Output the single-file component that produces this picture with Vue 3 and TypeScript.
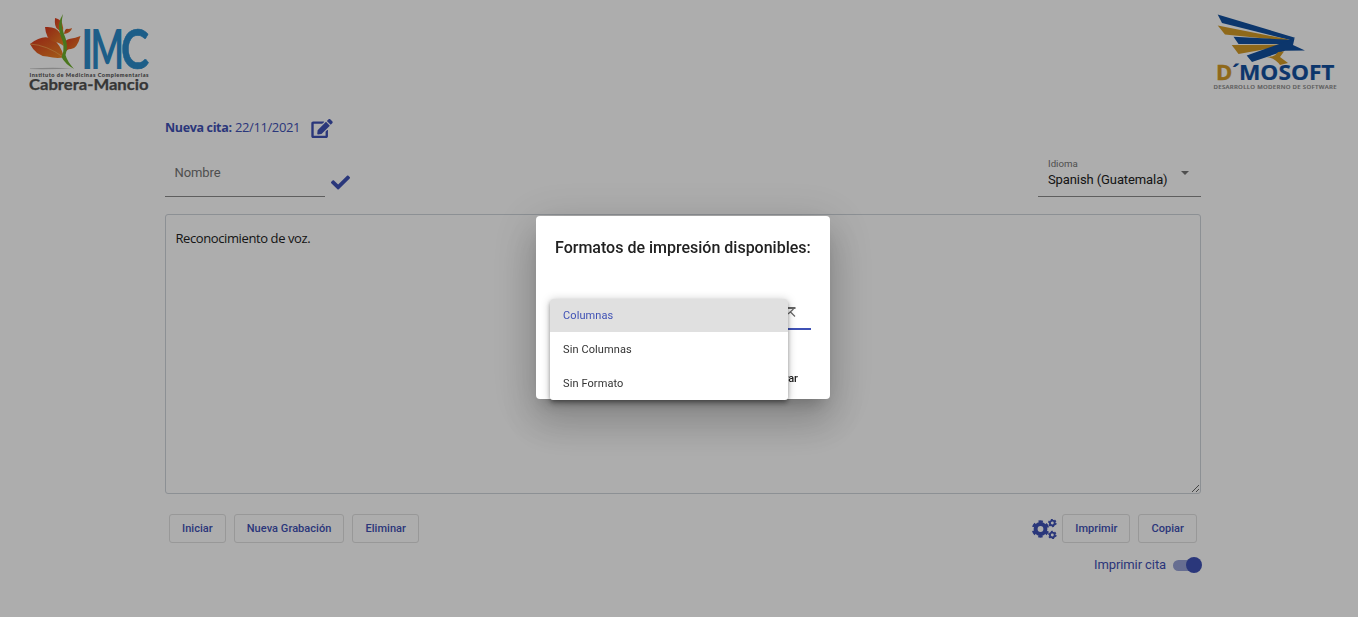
<script setup lang="ts">
import { ref } from 'vue'

const options = ['Columnas', 'Sin Columnas', 'Sin Formato']
const selected = ref('Columnas')
const name = ref('')
const transcript = ref('Reconocimiento de voz.')
const date = '22/11/2021'
</script>

<template>
  <div class="page">
    <header class="header">
      <svg class="logo-imc" width="124" height="84" viewBox="0 0 124 84">
        <defs>
          <linearGradient id="leaf" x1="0" y1="0" x2="1" y2="1">
            <stop offset="0" stop-color="#d8371f" />
            <stop offset="1" stop-color="#f08a25" />
          </linearGradient>
        </defs>
        <path d="M3 54.500Q24 53 46 54.300Q24 55.500 3 55Z" fill="#c4c4c4" />
        <path d="M3 30Q16 20 25 25Q33 29 37 43Q31 45 20 42.500Q9 42 3 30Z" fill="url(#leaf)" />
        <path d="M3 30Q20 31 36 43" fill="none" stroke="#f7b05a" stroke-width=".7" />
        <path d="M18 13Q29 12 33 19Q37 25 36.500 32Q32 28 26 27.500Q19 25 18 13Z" fill="url(#leaf)" />
        <path d="M28 4Q33 5 35 9Q37 14 36 20Q34 17 31 15.500Q27 13 28 4Z" fill="url(#leaf)" />
        <path d="M37 20Q38 14 41 15Q43 15 45 14Q44 19 37 20Z" fill="url(#leaf)" />
        <path d="M38 40Q34 27 42 25Q49 24 53.500 22Q50 35 44 35Q39 35 38 40Z" fill="url(#leaf)" />
        <path d="M36 0Q29 10 34 23Q39 33 34.500 43Q38 50 47 55Q40 47 38.500 41Q42 31 37 20Q33 11 36 0Z" fill="#6eaf2c" />
        <g font-family="Lato, sans-serif" font-weight="700" font-size="54.500" fill="#2b8bc9">
          <text x="54.300" y="55" textLength="12" lengthAdjust="spacingAndGlyphs">I</text>
          <text x="63.500" y="55" textLength="33.500" lengthAdjust="spacingAndGlyphs">M</text>
          <text x="94" y="55" textLength="28" lengthAdjust="spacingAndGlyphs" stroke="#2b8bc9" stroke-width=".6">C</text>
        </g>
        <text x="2.500" y="62.500" textLength="119" font-family="Lato, sans-serif" font-weight="900" font-size="5.600" fill="#555">Instituto de Medicinas Complementarias</text>
        <text x="2" y="76" textLength="119.500" lengthAdjust="spacingAndGlyphs" font-family="Lato, sans-serif" font-weight="700" font-size="15" stroke="#505050" stroke-width=".25" fill="#505050">Cabrera-Mancio</text>
      </svg>
      <svg class="logo-dmosoft" width="130" height="84" viewBox="0 0 130 84">
        <path d="M7.700 .5L85 23.700L82 26.500L12 9Z" fill="#12509f" />
        <path d="M7.700 11.500L79 25.500L74 26.500L15 20.500Z" fill="#d39b27" />
        <path d="M23.500 22.700L83 26L78 30L28.500 30Z" fill="#12509f" />
        <path d="M21.700 31L77 30.500L67 33L28.500 40Z" fill="#d39b27" />
        <path d="M36.700 41.500L84.500 24.500L83 31L95 36.500L75 36.700L42 48Z" fill="#12509f" />
        <path d="M56.700 43Q65 43 68 38L74 37.500L70 43L78 49L70 51Q65 44 56.700 43Z" fill="#d39b27" />
        <g font-family="Open Sans, sans-serif" font-weight="700" font-size="22">
          <text x="6" y="66" stroke="#d39b27" stroke-width=".4" fill="#d39b27">D</text>
          <text x="22" y="66" fill="#12509f">´</text>
          <text x="29" y="66" textLength="95.500" lengthAdjust="spacingAndGlyphs" stroke="#12509f" stroke-width=".2" fill="#12509f">MOSOFT</text>
        </g>
        <text x="3.500" y="75" textLength="123" font-family="Open Sans, sans-serif" font-weight="600" font-size="6" stroke="#888" stroke-width=".15" fill="#888">DESARROLLO MODERNO DE SOFTWARE</text>
      </svg>
    </header>

    <main class="content">
      <div class="appointment">
        <span><b>Nueva cita:</b> <span class="date">{{ date }}</span></span>
        <svg class="edit" width="22" height="19" viewBox="0 0 576 512" fill="currentColor"><path d="M402.600 83.200l90.200 90.200c3.800 3.800 3.800 10 0 13.800L274.400 405.600l-92.800 10.300c-12.400 1.400-22.900-9.100-21.500-21.500l10.300-92.800L388.800 83.200c3.800-3.800 10-3.800 13.800 0zm162-22.900l-48.800-48.800c-15.200-15.200-39.900-15.200-55.200 0l-35.400 35.400c-3.800 3.800-3.800 10 0 13.800l90.200 90.200c3.800 3.800 10 3.800 13.800 0l35.400-35.400c15.200-15.300 15.200-40 0-55.200zM384 346.200V448H64V128h229.800c3.200 0 6.200-1.300 8.500-3.500l40-40c7.600-7.600 2.200-20.500-8.500-20.500H48C21.500 64 0 85.500 0 112v352c0 26.500 21.500 48 48 48h352c26.500 0 48-21.500 48-48V306.200c0-10.700-12.900-16-20.500-8.500l-40 40c-2.200 2.300-3.500 5.300-3.500 8.500z" /></svg>
      </div>

      <div class="fields">
        <input v-model="name" class="name" placeholder="Nombre" />
        <svg class="check" width="19" height="19" viewBox="0 0 512 512" fill="currentColor"><path d="M173.900 439.400l-166.400-166.400c-10-10-10-26.200 0-36.200l36.200-36.200c10-10 26.200-10 36.200 0L192 312.700 432.100 72.600c10-10 26.200-10 36.200 0l36.200 36.200c10 10 10 26.200 0 36.200l-294.400 294.400c-10 10-26.200 10-36.200 0z" /></svg>
        <div class="language">
          <div>
            <div class="language-label">Idioma</div>
            <div class="language-value">Spanish (Guatemala)</div>
          </div>
          <i class="caret"></i>
        </div>
      </div>

      <textarea v-model="transcript" class="transcript" spellcheck="false"></textarea>

      <div class="actions">
        <button>Iniciar</button>
        <button>Nueva Grabación</button>
        <button>Eliminar</button>
        <svg class="cogs" width="25" height="20" viewBox="0 0 25 20" fill="none" stroke="currentColor">
          <circle cx="8.500" cy="10" r="4.900" stroke-width="4" />
          <circle cx="8.500" cy="10" r="7.500" stroke-width="2.400" stroke-dasharray="4.200 3.654" stroke-dashoffset="2.100" transform="rotate(30 8.500 10)" />
          <circle cx="20.300" cy="4" r="2.400" stroke-width="1.900" />
          <circle cx="20.300" cy="4" r="3.600" stroke-width="1.400" stroke-dasharray="2 1.770" />
          <circle cx="20.300" cy="16" r="2.400" stroke-width="1.900" />
          <circle cx="20.300" cy="16" r="3.600" stroke-width="1.400" stroke-dasharray="2 1.770" />
        </svg>
        <button>Imprimir</button>
        <button>Copiar</button>
      </div>
      <div class="print-toggle">
        <span class="toggle-label">Imprimir cita</span>
        <span class="track"><i class="thumb"></i></span>
      </div>
    </main>

    <div class="backdrop">
      <section class="dialog">
        <h2>Formatos de impresión disponibles:</h2>
        <div class="select-line">
          <svg width="10" height="12" viewBox="0 0 10 12" fill="none" stroke="#666"><path d="M0 1H9.500" stroke-width="2" /><path d="M7.500 2L2 7M4 4.500L9 9.500" stroke-width="1.200" /></svg>
        </div>
        <div class="close">Cerrar</div>
        <ul class="menu">
          <li v-for="option in options" :key="option" :class="{ active: option === selected }" @click="selected = option">{{ option }}</li>
        </ul>
      </section>
    </div>
  </div>
</template>

<style>
body {
  margin: 0;
  overflow: hidden;
}
</style>

<style scoped>
* {
  box-sizing: border-box;
}
.page {
  width: 1358px;
  height: 617px;
  background: #fff;
  font-family: Roboto, sans-serif;
  color: #3f51b5;
  overflow: hidden;
}
.header {
  display: flex;
  justify-content: space-between;
  padding: 14px 18px 0 27px;
  height: 112px;
}
.header svg {
  overflow: visible;
}
.content {
  width: 1036px;
  margin-left: 165px;
}
.appointment {
  display: flex;
  align-items: flex-start;
  height: 32px;
  padding-top: 5px;
  font: 13px/20px "Open Sans", "Noto Sans", sans-serif;
}
.appointment b {
  font-size: 12.500px;
  letter-spacing: -0.350px;
}
.date {
  letter-spacing: -0.400px;
}
.edit {
  margin: 2px 0 0 10.500px;
}
.fields {
  display: flex;
  height: 70px;
  padding-top: 12px;
}
.name {
  width: 160px;
  height: 41px;
  padding: 0 9.500px 8px;
  border: 0;
  border-bottom: 1px solid #8b8b8b;
  background: none;
  font: 13px Roboto, sans-serif;
  letter-spacing: -0.100px;
  outline: none;
}
.name::placeholder {
  color: #757575;
}
.check {
  margin: 17px 0 0 6px;
}
.language {
  display: flex;
  justify-content: space-between;
  width: 163px;
  height: 41px;
  margin-left: auto;
  padding: 2px 12px 0 10px;
  border-bottom: 1px solid #8b8b8b;
}
.language-label {
  font-size: 9.700px;
  line-height: 12px;
  color: #757575;
}
.language-value {
  font-size: 13px;
  line-height: 20px;
  letter-spacing: -0.100px;
  color: #212121;
}
.caret {
  margin-top: 13px;
  width: 0;
  height: 0;
  border: 4.500px solid transparent;
  border-top-color: #757575;
  border-bottom: 0;
}
.transcript {
  display: block;
  width: 1036px;
  height: 280px;
  padding: 13px 9.500px;
  border: 1px solid #ced4da;
  border-radius: 3px;
  font: 13px/20px "Open Sans", "Noto Sans", sans-serif;
  letter-spacing: -0.400px;
  color: #222;
  background: none;
  outline: none;
  resize: both;
}
.actions {
  display: flex;
  align-items: center;
  gap: 8px;
  height: 29px;
  margin-top: 20px;
  padding: 0 4px;
}
.actions button {
  height: 29px;
  padding: 0 12px;
  border: 1px solid #e0e0e0;
  border-radius: 3px;
  background: none;
  color: #3f51b5;
  font: 500 11px Roboto, sans-serif;
  letter-spacing: 0.050px;
  white-space: nowrap;
}
.cogs {
  margin: 0 -3px 0 auto;
}
.print-toggle {
  display: flex;
  justify-content: flex-end;
  align-items: center;
  height: 20px;
  margin-top: 12px;
  font-size: 13px;
}
.toggle-label {
  margin-bottom: 2px;
  letter-spacing: -0.100px;
}
.track {
  display: flex;
  justify-content: flex-end;
  align-items: center;
  width: 28px;
  height: 11px;
  margin: 0 0 0 7px;
  border-radius: 6px;
  background: #98a2d6;
}
.thumb {
  flex: none;
  width: 16px;
  height: 16px;
  margin-right: -1px;
  border-radius: 50%;
  background: #3f51b5;
}
.backdrop {
  position: fixed;
  inset: 0;
  display: flex;
  align-items: flex-start;
  justify-content: center;
  padding: 216px 0 0 8px;
  background: rgba(0, 0, 0, 0.32);
}
.dialog {
  position: relative;
  width: 294px;
  height: 183px;
  padding: 20px 19px;
  border-radius: 4px;
  background: #fff;
  color: #212121;
  box-shadow: 0 11px 15px -7px rgba(0, 0, 0, 0.2), 0 24px 38px 3px rgba(0, 0, 0, 0.14), 0 9px 46px 8px rgba(0, 0, 0, 0.12);
}
.dialog h2 {
  margin: 0;
  font: 500 16px/24px Roboto, sans-serif;
  white-space: nowrap;
}
.select-line {
  display: flex;
  justify-content: flex-end;
  height: 43px;
  margin-top: 27px;
  padding: 20px 15px 0 0;
  border-bottom: 2px solid #3f51b5;
}
.close {
  margin: 39px 13px 0 0;
  text-align: right;
  font: 500 11px/20px Roboto, sans-serif;
}
.menu {
  position: absolute;
  left: 14px;
  top: 83px;
  width: 238px;
  margin: 0;
  padding: 0;
  list-style: none;
  border-radius: 3px;
  overflow: hidden;
  background: #fff;
  box-shadow: 0 2px 4px -1px rgba(0, 0, 0, 0.3), 0 4px 5px rgba(0, 0, 0, 0.14), 0 1px 10px rgba(0, 0, 0, 0.22);
}
.menu li {
  height: 34px;
  padding-left: 13px;
  font-size: 11px;
  line-height: 36px;
  letter-spacing: 0.100px;
  color: #333;
}
.menu li.active {
  height: 33px;
  line-height: 33px;
  background: #e0e0e0;
  color: #3f51b5;
}
</style>
